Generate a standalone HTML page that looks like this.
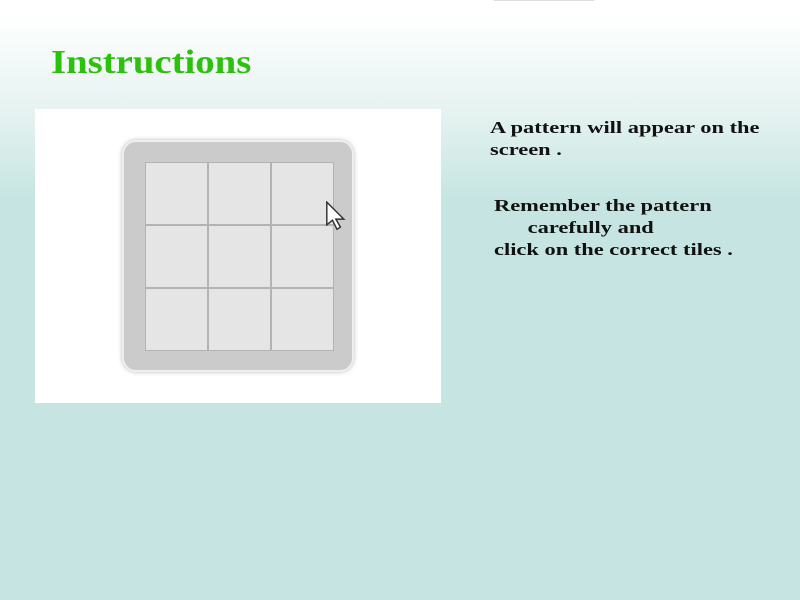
<!DOCTYPE html>
<html><head><style>
body{margin:0;width:800px;height:600px;overflow:hidden;background:linear-gradient(#fff 0px,#fff 15px,#e6f3f1 110px,#c6e5e2 200px,#c5e4e2 600px);position:relative;font-family:"Liberation Serif",serif;}
.bar{position:absolute;left:494px;top:0;width:100px;height:1px;background:#ddd}
h1{position:absolute;left:51px;top:44px;margin:0;font-size:34px;color:#2cc10c;font-weight:bold;transform:scaleX(1.14);transform-origin:0 0}
.img{position:absolute;left:35px;top:109px;width:406px;height:294px;background:#fff}
.panel{position:absolute;left:87px;top:31px;width:228px;height:228px;background:#cbcbcb;border:2px solid #eee;border-radius:14px;box-shadow:0 0 4px #bbb}
.grid{position:absolute;left:21px;top:20px;width:189px;height:189px;background:#b3b3b3;display:grid;grid-template-columns:61px 61px 61px;grid-template-rows:61px 61px 61px;gap:2px;padding:1px;box-sizing:border-box}
.grid div{background:#e5e5e5}
.t{position:absolute;font-weight:bold;font-size:17px;color:#111;line-height:22px;white-space:pre;transform:scaleX(1.32);transform-origin:0 0}
</style></head><body>
<div class="bar"></div>
<h1>Instructions</h1>
<div class="img"><div class="panel"><div class="grid"><div></div><div></div><div></div><div></div><div></div><div></div><div></div><div></div><div></div></div></div>
<svg style="position:absolute;left:290px;top:92px" width="24" height="34" viewBox="0 0 20 30"><path d="M1 1 L1 21 L6 17 L10 25 L13 23 L9 16 L16 16 Z" fill="#fff" stroke="#333" stroke-width="1.3"/></svg>
</div>
<div class="t" style="left:490px;top:117px">A pattern will appear on the
screen .</div>
<div class="t" style="left:494px;top:195px">Remember the pattern
      carefully and
click on the correct tiles .</div>
</body></html>
